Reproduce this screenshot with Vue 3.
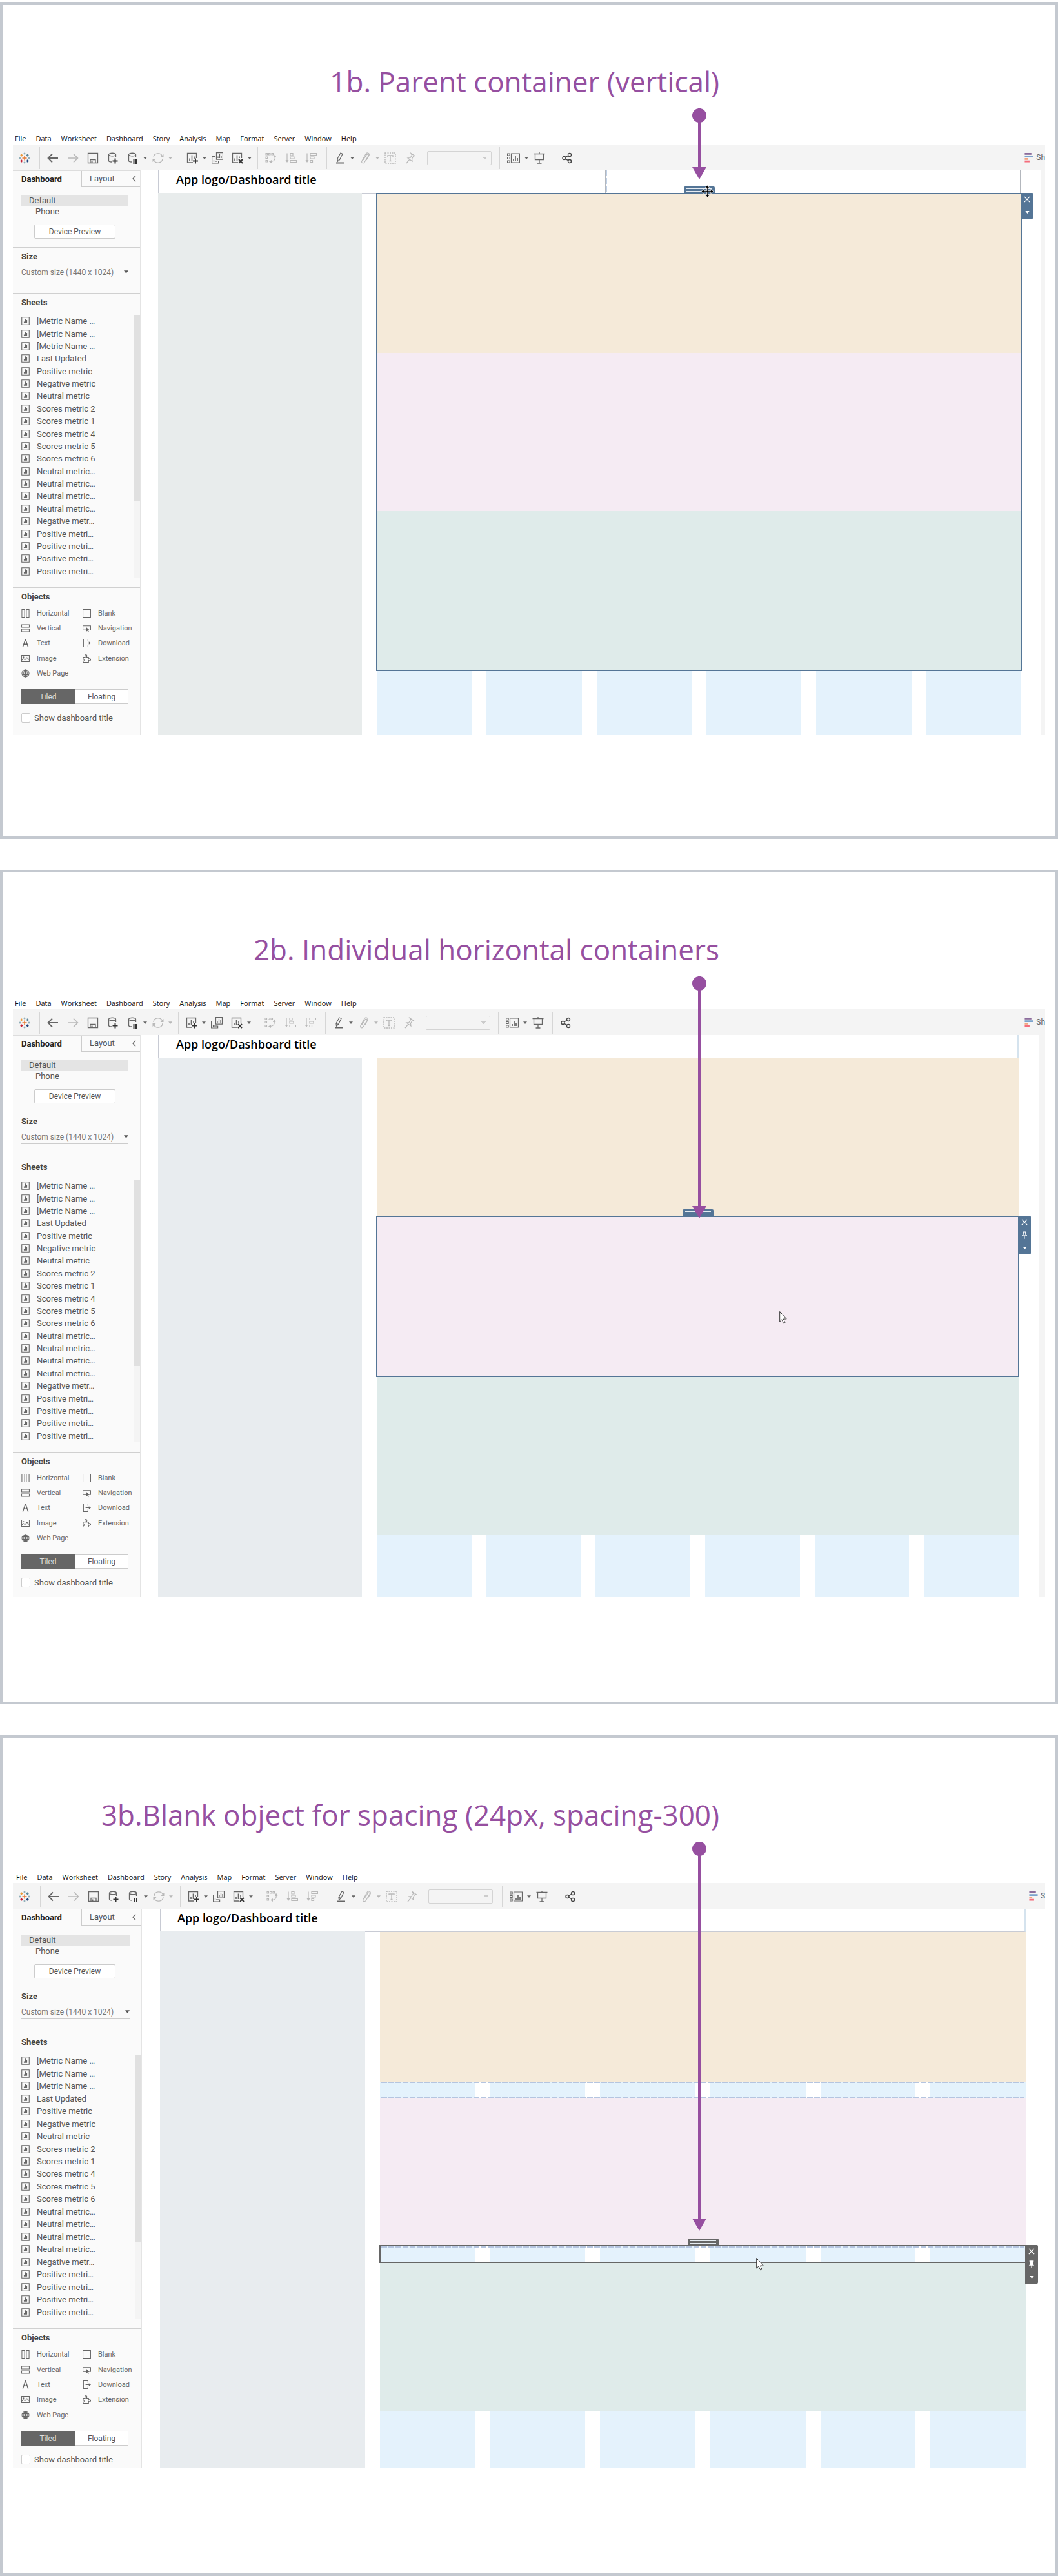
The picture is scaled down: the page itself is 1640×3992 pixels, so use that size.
<script setup>
const menus = ['File', 'Data', 'Worksheet', 'Dashboard', 'Story', 'Analysis', 'Map', 'Format', 'Server', 'Window', 'Help']

const toolGroups = [
  [{ icon: 'back', label: 'Back' }, { icon: 'forward', label: 'Forward', dim: true }, { icon: 'save', label: 'Save' }, { icon: 'db-add', label: 'New data source' }, { icon: 'db-pause', label: 'Pause updates', caret: true }, { icon: 'refresh', label: 'Refresh', dim: true, caret: true }],
  [{ icon: 'sheet-add', label: 'New worksheet', caret: true }, { icon: 'duplicate', label: 'Duplicate' }, { icon: 'sheet-clear', label: 'Clear sheet', caret: true }],
  [{ icon: 'swap', label: 'Swap', dim: true }, { icon: 'sort-asc', label: 'Sort ascending', dim: true }, { icon: 'sort-desc', label: 'Sort descending', dim: true }],
  [{ icon: 'pen', label: 'Highlight', caret: true }, { icon: 'clip', label: 'Group', dim: true, caret: true }, { icon: 'label', label: 'Labels', dim: true }, { icon: 'pin', label: 'Fix axes', dim: true }, { combo: true }],
  [{ icon: 'cards', label: 'Show cards', wide: true, caret: true }, { icon: 'present', label: 'Presentation mode' }],
  [{ icon: 'share', label: 'Share' }],
]

const sheets = [
  '[Metric Name …', '[Metric Name …', '[Metric Name …', 'Last Updated', 'Positive metric', 'Negative metric',
  'Neutral metric', 'Scores metric 2', 'Scores metric 1', 'Scores metric 4', 'Scores metric 5', 'Scores metric 6',
  'Neutral metric…', 'Neutral metric…', 'Neutral metric…', 'Neutral metric…', 'Negative metr…',
  'Positive metri…', 'Positive metri…', 'Positive metri…', 'Positive metri…',
]

const objects = [
  ['horizontal', 'Horizontal'], ['blank', 'Blank'], ['vertical', 'Vertical'], ['navigation', 'Navigation'],
  ['text', 'Text'], ['download', 'Download'], ['image', 'Image'], ['extension', 'Extension'], ['web', 'Web Page'],
]

const panels = [
  {
    id: 'one', title: '1b. Parent container (vertical)', show: 'Sh', arrow: 110, cursor: 'move', outer: true,
    rows: [{ kind: 'tan', h: 247 }, { kind: 'pink', h: 245 }, { kind: 'green', h: 247 }],
  },
  {
    id: 'two', title: '2b. Individual horizontal containers', show: 'Sh', arrow: 375, cursor: 'pointer',
    rows: [{ kind: 'tan', h: 245 }, { kind: 'pink', h: 248, selected: true, pin: 'pin-outline' }, { kind: 'green', h: 245 }],
  },
  {
    id: 'three', title: '3b.Blank object for spacing (24px, spacing-300)', show: 'S', arrow: 603, cursor: 'pointer',
    rows: [{ kind: 'tan', h: 232 }, { kind: 'blank', h: 25 }, { kind: 'pink', h: 229 }, { kind: 'blank', h: 26, selected: true, pin: 'pin-solid' }, { kind: 'green', h: 230 }],
  },
]
</script>

<template>
  <svg class="sprite" aria-hidden="true">
    <symbol id="logo" viewBox="0 0 18 18">
      <g fill="none" stroke-width="1.4">
        <path stroke="#e8762d" d="M9 5.5v7M5.500 9h7" />
        <path stroke="#eb9a3c" d="M4.500 2.500v4M2.500 4.500h4" />
        <path stroke="#5b879b" d="M13.500 2.500v4M11.500 4.500h4" />
        <path stroke="#c72035" d="M4.500 11.500v4M2.500 13.500h4" />
        <path stroke="#1f447e" d="M13.500 11.500v4M11.500 13.500h4" />
        <path stroke="#7199a6" stroke-width="1" d="M9 .5v3M7.500 2h3M2 7.500v3M.5 9h3M16 7.500v3M14.500 9h3M9 14.500v3M7.500 16h3" />
      </g>
    </symbol>
    <symbol id="back" viewBox="0 0 18 18"><path fill="none" stroke="currentColor" stroke-width="1.800" d="M17 9H2M8 2.500 1.500 9 8 15.500" /></symbol>
    <symbol id="forward" viewBox="0 0 18 18"><path fill="none" stroke="currentColor" stroke-width="1.600" d="M1 9h15M10 2.500 16.500 9 10 15.500" /></symbol>
    <symbol id="save" viewBox="0 0 18 18"><path fill="none" stroke="currentColor" stroke-width="1.300" d="M1.500 1.500h15v15h-15zM5 16.500v-5h8v5" /><path fill="currentColor" d="M6.500 13.500h2v3h-2z" /></symbol>
    <symbol id="db-add" viewBox="0 0 18 18"><path fill="none" stroke="currentColor" stroke-width="1.300" d="M13.500 8V3.500M2.500 3.500v9.500c0 1 2 2 4.500 2M2.500 3.500c0-3 11-3 11 0s-11 3-11 0" /><path fill="none" stroke="#333" stroke-width="2" d="M12.500 9.500v8M8.500 13.500h8" /></symbol>
    <symbol id="db-pause" viewBox="0 0 18 18"><path fill="none" stroke="currentColor" stroke-width="1.300" d="M13.500 8V3.500M2.500 3.500v9.500c0 1 2 2 4.500 2M2.500 3.500c0-3 11-3 11 0s-11 3-11 0" /><path fill="none" stroke="#333" stroke-width="2" d="M10.500 11v7M14 11v7" /></symbol>
    <symbol id="refresh" viewBox="0 0 18 18"><path fill="none" stroke="currentColor" stroke-width="1.300" d="M2 8c.5-7 11-8.500 13.500-2M16 10c-.5 7-11 8.500-13.500 2" /><path fill="currentColor" d="M17.500 3v5h-5zM.5 15v-5h5z" /></symbol>
    <symbol id="sheet-add" viewBox="0 0 18 18"><path fill="none" stroke="currentColor" stroke-width="1.300" d="M10 16H1.500V1.500h14V9" /><path fill="none" stroke="currentColor" stroke-width="1.600" d="M5 13V9.500M8.500 13V4.500M12 10V6.500" /><path fill="none" stroke="#333" stroke-width="2" d="M14 9.500v8M10 13.500h8" /></symbol>
    <symbol id="sheet-clear" viewBox="0 0 18 18"><path fill="none" stroke="currentColor" stroke-width="1.300" d="M10 16H1.500V1.500h14V9" /><path fill="none" stroke="currentColor" stroke-width="1.600" d="M5 13V9.500M8.500 13V4.500M12 9V6.500" /><path fill="none" stroke="#333" stroke-width="2" d="m11 11 6 6M17 11l-6 6" /></symbol>
    <symbol id="duplicate" viewBox="0 0 18 18"><path fill="none" stroke="currentColor" stroke-width="1.200" d="M7.500.6h10v10.500h-10zM5 6.500H.6v10.500h10v-3.500" /><path fill="none" stroke="currentColor" stroke-width="1.200" d="M10 9V6.500M12.500 9V3M15 9V5M3.500 15v-3M6 15v-2M8 15v-2" /></symbol>
    <symbol id="swap" viewBox="0 0 18 18"><path fill="none" stroke="currentColor" stroke-width="1.100" d="M1 1.500h2.500V4H1zM5.500 1.500H8V4H5.500zM10 1.500h2.500V4H10zM1 7h2.500v2.500H1zM1 12.500h2.500V15H1zM14.500 6c2 4 0 8.500-6.500 8.500" /><path fill="currentColor" d="M15 3.500 17.500 8h-4.500zM6 14.500 10 12v5z" /></symbol>
    <symbol id="sort-asc" viewBox="0 0 18 18"><path fill="none" stroke="currentColor" stroke-width="1.200" d="M3 1.500v13M8 1.500h4V5H8zM8 7h6v3H8zM8 12.500h9.500v3H8z" /><path fill="currentColor" d="M.5 12h5L3 16z" /></symbol>
    <symbol id="sort-desc" viewBox="0 0 18 18"><path fill="none" stroke="currentColor" stroke-width="1.200" d="M3 1.500v13M8 1.500h9.500v3H8zM8 7h6v3H8zM8 12.500h3.500v3H8z" /><path fill="currentColor" d="M.5 12h5L3 16z" /></symbol>
    <symbol id="pen" viewBox="0 0 18 18"><path fill="none" stroke="currentColor" stroke-width="1.200" d="m5 10 5-9 3 1.500-4.500 9L5.500 14zM5 10l3.500 1.500" /><path fill="currentColor" d="M3 15.500h12v2H3z" /></symbol>
    <symbol id="clip" viewBox="0 0 18 18"><path fill="none" stroke="currentColor" stroke-width="1.200" d="m6 12 5-8c1.500-2 4-.5 3 1.500l-6 10c-2 2.500-5.500 1-4-2l6-11c2-3 6.500-1 5 2.500l-4 7" /></symbol>
    <symbol id="label" viewBox="0 0 18 18"><path fill="none" stroke="currentColor" stroke-width="1.400" stroke-dasharray="2 1.500" d="M1 1h16v16H1z" /><path fill="none" stroke="currentColor" stroke-width="1.300" d="M5 7V5h8v2M9 5v8.500M7.500 13.500h3" /></symbol>
    <symbol id="pin" viewBox="0 0 18 18"><path fill="none" stroke="currentColor" stroke-width="1.200" d="m10 1.500 6 4-2 .5-2.500 4 .5 4-7-5 4-.5 2.500-4zM8 11l-5 6" /></symbol>
    <symbol id="cards" viewBox="0 0 20 18"><path fill="none" stroke="currentColor" stroke-width="1.200" d="M.6 2h3.500v3H.6zM.6 7.500h3.500v3H.6zM.6 13h3.500v3H.6zM6.500 2h13v14h-13z" /><path fill="none" stroke="currentColor" stroke-width="1.700" d="M10 14v-3M13 14V6M16 14V9" /></symbol>
    <symbol id="present" viewBox="0 0 18 18"><path fill="none" stroke="currentColor" stroke-width="1.300" d="M.5 2.500h17M2.500 2.500v9h13v-9M9 11.500v5M5.500 17h7M9 0v2" /></symbol>
    <symbol id="share" viewBox="0 0 18 18"><g fill="none" stroke="#444" stroke-width="1.400"><circle cx="4.500" cy="9" r="2.500" /><circle cx="13" cy="4" r="2.500" /><circle cx="13" cy="14" r="2.500" /><path d="m6.700 7.700 4-2.400M6.700 10.300l4 2.400" /></g></symbol>
    <symbol id="show-me" viewBox="0 0 14 16"><path fill="#8c6d9c" d="M0 0h11v3H0z" /><path fill="#7ba3cc" d="M0 4.500h14v3H0z" /><path fill="#f2a27e" d="M0 8.500h5v3H0z" /><path fill="#f46d7c" d="M0 12.500h8v3H0z" /></symbol>
    <symbol id="sheet" viewBox="0 0 14 14"><path fill="none" stroke="#666" stroke-width="1.200" d="M.8.8h12.400v12.400H.8z" /><path fill="none" stroke="#666" stroke-width="1.200" d="M4.800 10.500V8M7 10.500v-7M9.200 10.500V5.500" /></symbol>
    <symbol id="horizontal" viewBox="0 0 14 14"><path fill="none" stroke="currentColor" stroke-width="1.100" d="M1 .6h4.500v12.800H1zM8.500.6H13v12.800H8.500z" /></symbol>
    <symbol id="vertical" viewBox="0 0 14 14"><path fill="none" stroke="currentColor" stroke-width="1.100" d="M.6 1h12.800v4.500H.6zM.6 8.500h12.800V13H.6z" /></symbol>
    <symbol id="blank" viewBox="0 0 14 14"><path fill="none" stroke="currentColor" stroke-width="1.100" d="M.6.6h12.800v12.800H.6z" /></symbol>
    <symbol id="navigation" viewBox="0 0 14 14"><path fill="none" stroke="currentColor" stroke-width="1.100" d="M5.500 10H.6V3h12.800v7H12" /><path fill="currentColor" d="m6 5 6 5.500-2.500.2 1.200 2.500-1.400.6-1.200-2.500L6 13z" /></symbol>
    <symbol id="text" viewBox="0 0 14 14"><path fill="none" stroke="currentColor" stroke-width="1.600" d="M2.500 13.500 7 .8l4.500 12.700M4 9h6" /></symbol>
    <symbol id="download" viewBox="0 0 14 14"><path fill="none" stroke="currentColor" stroke-width="1.100" d="M9 4V.6H1.500v12.800H9V10M5 7h7" /><path fill="currentColor" d="m10.500 4.500 3.500 2.500-3.500 2.500z" /></symbol>
    <symbol id="image" viewBox="0 0 14 14"><path fill="none" stroke="currentColor" stroke-width="1.100" d="M.6 1.500h12.800v11H.6zM1 9.500l3-2 2 2 3.500-4L13 9" /><circle cx="3.800" cy="4.500" r="1" fill="currentColor" /></symbol>
    <symbol id="extension" viewBox="0 0 14 14"><path fill="none" stroke="currentColor" stroke-width="1.200" d="M1 5h3.500C3.500 3 3.500.7 5.500.7S7.500 3 6.800 5H10v3c1-1 3.500-.8 3.500 1S11 11 10 10v3.400H1V11c3 .5 3.200-3 0-2.500z" /></symbol>
    <symbol id="web" viewBox="0 0 14 14"><g fill="none" stroke="currentColor" stroke-width="1.100"><circle cx="7" cy="7" r="6" /><ellipse cx="7" cy="7" rx="3" ry="6" /><path d="M7 1v12M1.500 4.800h11M1.500 9.200h11" /></g></symbol>
    <symbol id="close" viewBox="0 0 12 12"><path fill="none" stroke="#fff" stroke-width="1.500" d="m1 1 10 10M11 1 1 11" /></symbol>
    <symbol id="pin-outline" viewBox="0 0 12 14"><path fill="none" stroke="#fff" stroke-width="1.200" d="M2.500 1h7M4 1v5.500M8 1v5.500M4 6.500l-2.500 1.500h9L8 6.500M6 8v6" /></symbol>
    <symbol id="pin-solid" viewBox="0 0 12 14"><path fill="#fff" d="M2 0h8v2H8.500v4L11 9H6.700v5H5.300V9H1l2.500-3V2H2z" /></symbol>
    <symbol id="caret" viewBox="0 0 8 5"><path fill="currentColor" d="M0 0h8L4 5z" /></symbol>
    <symbol id="pointer" viewBox="0 0 12 20"><path fill="#fff" stroke="#333" stroke-width="1" d="M.7 1v15.500L4 13.300l2.700 6 2.300-1-2.600-5.800h4.800z" /></symbol>
    <symbol id="move" viewBox="0 0 20 20"><path fill="#000" stroke="#fff" stroke-width=".8" d="m10 0 3.500 4.500h-2.600v4.600h4.600V6.500L20 10l-4.500 3.500v-2.600h-4.600v4.600h2.600L10 20l-3.500-4.500h2.600v-4.600H4.500v2.600L0 10l4.500-3.500v2.600h4.600V4.500H6.500z" /></symbol>
  </svg>

  <main class="page">
    <section v-for="p in panels" :key="p.id" class="panel" :class="p.id">
      <h2 class="caption">{{ p.title }}</h2>

      <div class="app">
        <nav class="menu">
          <button v-for="m in menus" :key="m" type="button">{{ m }}</button>
        </nav>

        <div class="toolbar">
          <div class="group home">
            <button type="button" class="tool" aria-label="Start page"><svg><use href="#logo" /></svg></button>
          </div>
          <div v-for="(g, gi) in toolGroups" :key="gi" class="group">
            <template v-for="(t, ti) in g" :key="ti">
              <select v-if="t.combo" class="combo" aria-label="Fit" disabled></select>
              <button v-else type="button" class="tool" :class="{ dim: t.dim, wide: t.wide }" :aria-label="t.label">
                <svg><use :href="'#' + t.icon" /></svg>
              </button>
              <button v-if="t.caret" type="button" class="drop" :class="{ dim: t.dim }" :aria-label="t.label + ' options'">
                <svg><use href="#caret" /></svg>
              </button>
            </template>
          </div>
          <button type="button" class="show-me"><svg><use href="#show-me" /></svg><span>{{ p.show }}</span></button>
        </div>

        <div class="body">
          <aside class="side">
            <div class="tabs">
              <button type="button" class="tab on">Dashboard</button>
              <button type="button" class="tab">Layout</button>
              <button type="button" class="fold" aria-label="Collapse"><svg viewBox="0 0 6 10"><path fill="none" stroke="#666" stroke-width="1.300" d="M5 .5 1 5l4 4.500" /></svg></button>
            </div>
            <div class="devices">
              <div class="device on">Default</div>
              <div class="device phone">Phone</div>
              <button type="button" class="preview">Device Preview</button>
            </div>
            <div class="size">
              <h3><label :for="'size-' + p.id">Size</label></h3>
              <div class="select">
                <select :id="'size-' + p.id"><option>Custom size (1440 x 1024)</option></select>
                <svg><use href="#caret" /></svg>
              </div>
            </div>
            <div class="sheets">
              <h3>Sheets</h3>
              <div class="scroll">
                <ul>
                  <li v-for="(s, si) in sheets" :key="si"><svg><use href="#sheet" /></svg>{{ s }}</li>
                </ul>
                <div class="track"><div class="thumb"></div></div>
              </div>
            </div>
            <div class="objects">
              <h3>Objects</h3>
              <div class="grid">
                <button v-for="o in objects" :key="o[0]" type="button"><svg><use :href="'#' + o[0]" /></svg>{{ o[1] }}</button>
              </div>
              <div class="mode">
                <button type="button" class="on" aria-pressed="true">Tiled</button>
                <button type="button" aria-pressed="false">Floating</button>
              </div>
              <label class="check"><input type="checkbox" />Show dashboard title</label>
            </div>
          </aside>

          <div class="canvas">
            <header class="head">
              <h1>App logo/Dashboard title</h1>
              <div class="slot"></div>
            </header>
            <div class="work">
              <div class="rail"></div>
              <div class="content">
                <div class="stack">
                  <div v-for="(r, ri) in p.rows" :key="ri" class="row" :class="[r.kind, { selected: r.selected }]" :style="{ height: r.h + 'px' }">
                    <template v-if="r.kind === 'blank'"><i v-for="n in 6" :key="n"></i></template>
                    <div v-if="r.selected" class="frame">
                      <span class="handle"></span>
                      <div class="actions">
                        <button type="button" aria-label="Remove"><svg class="x"><use href="#close" /></svg></button>
                        <button type="button" aria-label="Fix size"><svg class="pin"><use :href="'#' + r.pin" /></svg></button>
                        <button type="button" aria-label="More options"><svg class="more"><use href="#caret" /></svg></button>
                      </div>
                    </div>
                  </div>
                  <div v-if="p.outer" class="frame">
                    <span class="handle"></span>
                    <div class="actions">
                      <button type="button" aria-label="Remove"><svg class="x"><use href="#close" /></svg></button>
                      <button type="button" aria-label="More options"><svg class="more"><use href="#caret" /></svg></button>
                    </div>
                  </div>
                  <svg class="cursor" :class="p.cursor"><use :href="'#' + p.cursor" /></svg>
                </div>
                <div class="columns"><i v-for="n in 6" :key="n"></i></div>
              </div>
            </div>
          </div>
          <div class="edge"></div>
        </div>
      </div>

      <div class="callout" :style="{ height: p.arrow + 'px' }"></div>
    </section>
  </main>
</template>

<style>
body { margin: 0; background: #fff; }
</style>

<style scoped>
* { box-sizing: border-box; }
button, select { font: inherit; color: inherit; background: none; border: 0; padding: 0; margin: 0; border-radius: 0; }
button { display: block; white-space: nowrap; }
h1, h2, h3, ul { margin: 0; padding: 0; }
svg { display: block; }
.sprite { position: absolute; width: 0; height: 0; }

.page { display: flex; flex-direction: column; gap: 48px; padding-top: 3px; font-family: Roboto, "Liberation Sans", sans-serif; font-size: 13px; color: #555; }
.panel { position: relative; border: 4px solid #c4c9d0; padding: 0 16px; overflow: hidden; }
.one { --groups: 42px 216px 122px 107px 268px 84px; --cap: 199px; --end: 157px; --rail: 316px; --lead: 27px; --right: 30px; --strip: 7px; --rail-bg: #e8ecec; --sel: #547596; }
.two { --groups: 42px 215px 122px 106px 268px 84px; --cap: 194px; --end: 162px; --rail: 316px; --lead: 27px; --right: 31px; --strip: 10px; --rail-bg: #e8ecef; --sel: #547596; }
.three { --groups: 43px 217px 122px 107px 270px 85px; --cap: 207px; --end: 163px; --rail: 318px; --lead: 28px; --right: 30px; --strip: 0px; --rail-bg: #e8ecef; --sel: #666; }
.panel { padding-bottom: var(--end); }

.caption { height: var(--cap); padding: 89px 505px 0 0; text-align: right; white-space: nowrap; font: 400 44px/60px "Open Sans", "Noto Sans", sans-serif; color: #964fa0; }

.callout { position: absolute; top: 161px; right: 541px; width: 22px; pointer-events: none; z-index: 5;
  background: linear-gradient(#964fa0, #964fa0) center 0 / 4px calc(100% - 18px) no-repeat; }
.callout::before { content: ""; display: block; width: 22px; height: 22px; border-radius: 50%; background: #964fa0; }
.callout::after { content: ""; position: absolute; left: 0; bottom: 0; width: 22px; height: 19px; background: #964fa0; clip-path: polygon(0 0, 100% 0, 50% 100%); }

.menu { display: flex; gap: 15px; height: 18px; padding-left: 3px; font: 11px/18px "Open Sans", "Noto Sans", sans-serif; color: #111; }
.three .menu { padding-left: 5px; }

.toolbar { display: grid; grid-template-columns: var(--groups) 1fr auto; height: 40px; background: #f4f4f4; color: #666; }
.group { display: flex; align-items: center; gap: 13px; padding-left: 11px; margin: 4px 0 2px; border-right: 1px solid #d6d6d6; }
.group.home { padding-left: 9px; }
.group:nth-child(7) { border-right: 0; }
.tool svg { width: 18px; height: 18px; }
.tool.wide svg { width: 20px; }
.tool.dim, .drop.dim { color: #b8b8b8; }
.drop { margin: 0 -5px 0 -6px; }
.drop svg { width: 6px; height: 4px; }
.combo { width: 100px; height: 22px; margin-left: 4px; border: 1px solid #d4d4d4; border-radius: 2px; appearance: none; opacity: 1;
  background: linear-gradient(to bottom right, #ccc 50%, transparent 50%) right 5px center / 4px 4px no-repeat, linear-gradient(to bottom left, #ccc 50%, transparent 50%) right 9px center / 4px 4px no-repeat; }
.show-me { display: flex; align-items: center; gap: 4px; font-size: 12px; }
.show-me svg { flex: none; width: 14px; height: 15px; }

.body { display: flex; }
.side { flex: none; width: 198px; background: #fafafa; border-right: 1px solid #e4e4e4; }
.three .side { width: 200px; }
.side h3 { font-size: 13px; line-height: 16px; font-weight: 700; color: #444; }
.tabs { display: flex; height: 26px; border-top: 1px solid #ddd; line-height: 24px; }
.tab { flex: 0 0 106px; text-align: left; padding-left: 13px; }
.tab.on { font-weight: 700; color: #222; }
.tab:not(.on) { flex: 0 0 70px; border-left: 1px solid #ccc; border-bottom: 1px solid #ccc; padding-left: 12px; }
.fold { flex: 1; border-bottom: 1px solid #ccc; }
.fold svg { width: 6px; height: 10px; margin-left: 9px; }
.devices { padding: 12px 18px 13px 13px; border-bottom: 1px solid #d0d0d0; }
.three .devices { padding-top: 14px; }
.device { height: 17px; line-height: 17px; padding-left: 12px; }
.device.on { background: #e4e4e4; }
.device.phone { height: 18px; line-height: 18px; padding-left: 22px; }
.preview { width: 126px; height: 22px; margin: 11px 0 0 20px; border: 1px solid #ccc; border-radius: 2px; background: #fff; font-size: 12px; text-align: center; }
.size { padding: 6px 18px 21px 13px; border-bottom: 1px solid #d0d0d0; }
.select { position: relative; margin-top: 5px; border-bottom: 1px solid #ccc; height: 22px; }
.select select { width: 100%; height: 21px; appearance: none; font-size: 12px; color: #777; }
.select svg { position: absolute; right: 0; top: 8px; width: 7px; height: 5px; pointer-events: none; }
.sheets { padding-top: 6px; border-bottom: 1px solid #d0d0d0; padding-bottom: 15px; }
.sheets h3 { padding-left: 13px; }
.scroll { display: flex; margin-top: 11px; height: 407px; }
.three .scroll { height: 409px; }
.scroll ul { flex: 1; display: flex; flex-direction: column; padding-left: 13px; list-style: none; }
.scroll li { flex: 1; display: flex; align-items: center; gap: 11px; white-space: nowrap; }
.scroll li svg { width: 13px; height: 13px; }
.track { width: 10px; background: #f4f4f4; }
.thumb { height: 71%; background: #e0e0e0; }
.objects { padding: 6px 0 19px 13px; }
.two .objects { padding-bottom: 15px; }
.three .objects { padding-bottom: 6px; }
.grid { display: grid; grid-template-columns: 95px 1fr; grid-auto-rows: 1fr; height: 116px; margin-top: 6px; }
.three .grid { height: 117px; }
.grid button { display: flex; align-items: center; gap: 11px; font-size: 11px; color: #666; }
.grid svg { width: 13px; height: 13px; }
.mode { display: flex; margin-top: 13px; width: 166px; height: 23px; }
.mode button { flex: 1; border: 1px solid #ccc; background: #fff; font-size: 12px; text-align: center; }
.mode .on { background: #666; border-color: #666; color: #ddd; }
.check { display: flex; align-items: center; gap: 6px; height: 16px; margin-top: 13px; }
.check input { appearance: none; width: 14px; height: 15px; margin: 0; border: 1px solid #ccc; border-radius: 2px; background: #fff; }

.canvas { flex: 1; min-width: 0; display: flex; flex-direction: column; padding: 0 var(--right) 0 var(--lead); }
.head { display: flex; justify-content: space-between; height: 36px; border: 1px solid #c8cbd4; border-top: 0; padding-left: 27px; }
.three .head { padding-left: 26px; }
.two .head, .three .head { border-right: 2px solid #d5e3ee; }
.head h1 { font: 600 18px/29px "Open Sans", "Noto Sans", sans-serif; color: #000; white-space: nowrap; }
.slot { width: 644px; }
.one .slot { border-left: 2px solid #b3b7bd; border-right: 1px solid #b3b7bd; background: linear-gradient(#bfd0e6 75%, transparent 75%) 0 0 / 1px 12px repeat-y; }
.work { flex: 1; display: flex; gap: 23px; }
.rail { width: var(--rail); background: var(--rail-bg); margin-top: -1px; }
.content { flex: 1; display: flex; flex-direction: column; }
.stack { position: relative; }
.row { position: relative; }
.tan { background: #f5ead9; }
.pink { background: #f5ebf3; }
.green { background: #dfebea; }
.columns, .blank { display: grid; grid-template-columns: repeat(6, 1fr); column-gap: 23px; background: #fff; }
.columns { flex: 1; }
.columns i, .blank i { background: #e4f2fc; }
.blank::before, .blank:not(.selected)::after { content: ""; position: absolute; left: 2px; right: 2px; top: 0; height: 2px; background: repeating-linear-gradient(90deg, #b5c5e0 0 9px, transparent 9px 11px); }
.blank:not(.selected)::after { top: auto; bottom: 0; }
.blank.selected::before { top: 1px; }
.frame { position: absolute; inset: -1px; border: 2px solid var(--sel); z-index: 2; }
.handle { position: absolute; left: 50%; bottom: 100%; margin-left: -24px; width: 48px; height: 12px; border-radius: 2px 2px 0 0;
  background: linear-gradient(#e6ecf2, #e6ecf2) 4px 3px / 40px 1px no-repeat, linear-gradient(#e6ecf2, #e6ecf2) 4px 7px / 40px 1px no-repeat, var(--sel); }
.actions { position: absolute; left: 100%; top: -2px; width: 20px; background: var(--sel); border-radius: 0 2px 2px 0; color: #fff; }
.actions button { width: 100%; height: 20px; display: grid; place-items: center; }
.x { width: 10px; height: 10px; }
.pin { width: 10px; height: 14px; }
.more { width: 7px; height: 4px; }
.cursor { position: absolute; z-index: 3; }
.cursor.move { width: 19px; height: 19px; left: 50%; top: -13px; margin-left: 3px; }
.cursor.pointer { width: 12px; height: 21px; }
.two .cursor { left: 624px; top: 391px; }
.three .cursor { left: 583px; top: 504px; }
.edge { width: var(--strip); background: #f4f4f4; }
</style>
